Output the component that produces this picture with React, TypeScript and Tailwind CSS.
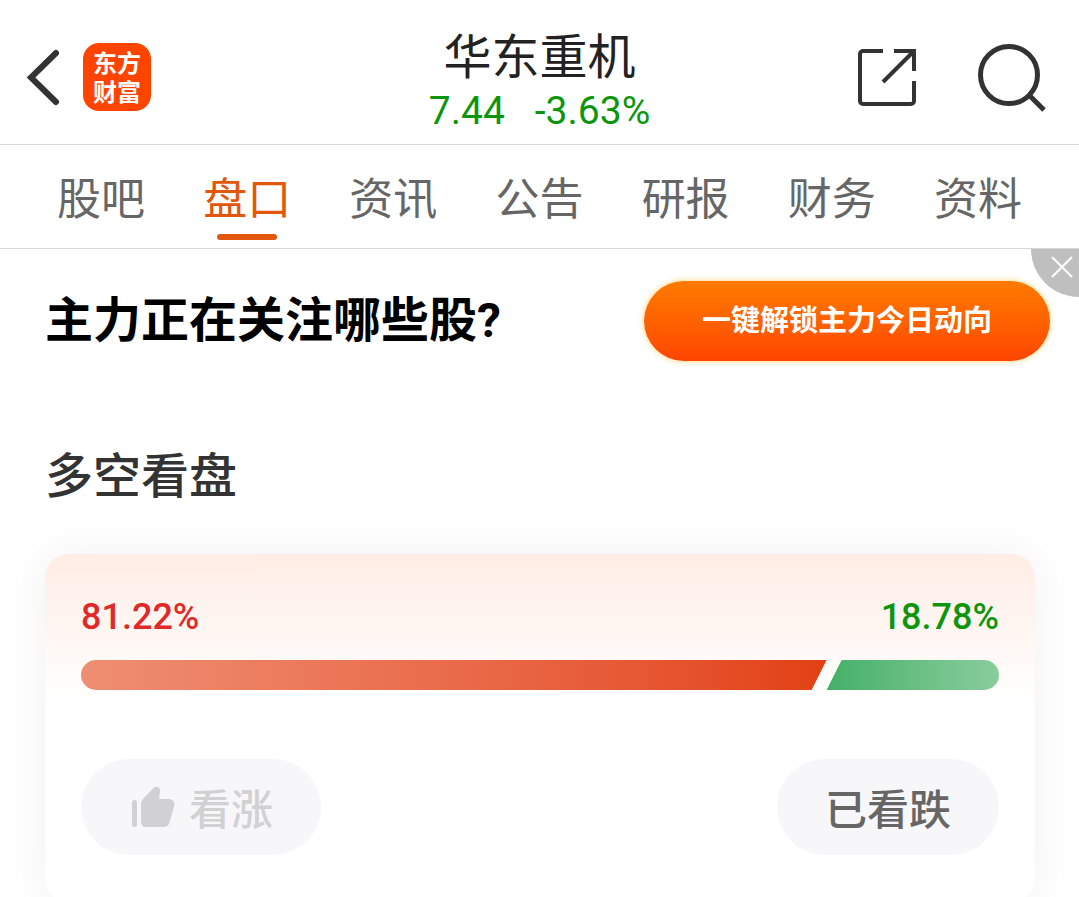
const tabs = ["股吧", "盘口", "资讯", "公告", "研报", "财务", "资料"];
const activeTab = "盘口";

const stock = {
  name: "华东重机",
  price: "7.44",
  change: "-3.63%",
};

const votes = { up: 81.22, down: 18.78 };

const Header = () => {
  return (
    <header className="grid h-[145px] grid-cols-[1fr_auto_1fr] items-center border-b border-[#d8d8d8] px-6 pt-2.5">
      <div className="flex items-center gap-5">
        <button type="button" aria-label="返回">
          <svg width="39" height="60" viewBox="0 0 39 60" fill="none" className="block">
            <path d="M32 6L7 30.500L32 55" stroke="#333" strokeWidth="6" strokeLinecap="round" />
          </svg>
        </button>
        <a
          href="#home"
          className="flex size-17 items-center justify-center rounded-2xl bg-[#ff4400] pb-0.5 text-2xl leading-[29px] font-bold text-white"
        >
          <span className="w-12 break-all">东方财富</span>
        </a>
      </div>

      <div className="flex flex-col items-center pt-2">
        <h1 className="text-5xl leading-[60px] text-[#222]">{stock.name}</h1>
        <p className="flex gap-[30px] font-[Roboto] text-[39px] leading-14 text-[#0d960d]">
          <span>{stock.price}</span>
          <span>{stock.change}</span>
        </p>
      </div>

      <div className="flex items-center justify-end gap-14">
        <button type="button" aria-label="分享">
          <svg width="64" height="64" viewBox="0 0 64 64" fill="none" stroke="#333" strokeWidth="4">
            <path d="M28 6H8a3 3 0 0 0-3 3V56a3 3 0 0 0 3 3H56a3 3 0 0 0 3-3V36" />
            <path d="M39 6H59V26" />
            <path d="M58 7L28 37" />
          </svg>
        </button>
        <button type="button" aria-label="搜索">
          <svg width="80" height="72" viewBox="0 0 80 72" fill="none" stroke="#333">
            <circle cx="34" cy="34" r="28.500" strokeWidth="5" />
            <path d="M54 54L69 69" strokeWidth="5" />
          </svg>
        </button>
      </div>
    </header>
  );
};

const TabBar = () => {
  return (
    <nav className="flex border-b border-[#d8d8d8] px-7">
      {tabs.map((tab) => (
        <a
          key={tab}
          href={`#${tab}`}
          aria-current={tab === activeTab ? "page" : undefined}
          className={`flex flex-1 flex-col items-center pt-[23px] pb-2 text-[44px] leading-14 ${tab === activeTab ? "text-[#e2570b]" : "text-[#666]"}`}
        >
          {tab}
          <span className={`mt-2.5 h-1.5 w-15 rounded-full ${tab === activeTab ? "bg-[#e2570b]" : ""}`} />
        </a>
      ))}
    </nav>
  );
};

const Banner = () => {
  return (
    <section className="relative flex items-center justify-between py-8 pr-[29px] pl-[45px]">
      <h2 className="font-['Roboto','Noto_Sans_CJK_SC',sans-serif] text-5xl leading-14 font-bold text-black">
        主力正在关注哪些股?
      </h2>
      <button
        type="button"
        className="h-20 rounded-full bg-linear-to-b from-[#ff7a00] to-[#ff4400] px-[58px] pb-1 text-[29px] font-bold text-white shadow-[0_0_6px_#ffcf70]"
      >
        一键解锁主力今日动向
      </button>
      <button
        type="button"
        aria-label="关闭"
        className="absolute top-0 right-0 flex size-12 items-center justify-end rounded-bl-full bg-[#bfbfbf] pr-1.5 pb-3"
      >
        <svg width="22" height="22" viewBox="0 0 22 22" stroke="#fff" strokeWidth="2">
          <path d="M1 1L21 21M21 1L1 21" />
        </svg>
      </button>
    </section>
  );
};

const VoteCard = () => {
  return (
    <div className="rounded-3xl bg-white bg-linear-to-b from-[#ffede5] to-white to-42% px-9 pt-10 pb-12 shadow-[0_0_48px_rgba(0,0,0,0.06)]">
      <div className="flex justify-between font-[Roboto] text-4xl leading-[46px] font-medium">
        <span className="text-[#e02a2a]">{votes.up}%</span>
        <span className="text-[#0d960d]">{votes.down}%</span>
      </div>

      <div className="mt-5 flex h-[30px] overflow-hidden rounded-full">
        <div
          className="bg-linear-to-r from-[#ee8e72] to-[#e24012] [clip-path:polygon(0_0,100%_0,calc(100%-15px)_100%,0_100%)]"
          style={{ width: `${votes.up}%` }}
        />
        <div className="flex-1 bg-linear-to-r from-[#42b067] to-[#88cd9d] [clip-path:polygon(15px_0,100%_0,100%_100%,0_100%)]" />
      </div>

      <div className="mt-[69px] flex justify-between text-[42px] font-medium">
        <button
          type="button"
          className="flex h-24 items-center gap-3 rounded-full bg-[#f7f7fa] px-12 pb-0.5 text-[#d1d1d3]"
        >
          <svg width="48" height="48" viewBox="0 0 48 48" fill="currentColor">
            <rect x="3" y="18" width="5" height="27" rx="2.500" />
            <path d="M12 22c0-2 1-4 2-5L24 6.500c1-1.500 3-2 4.500-1.500 2 .7 3 2.500 2.500 4.500L30 17H40c4 0 6.500 4 5 8L40 42c-1 2-3 3-5 3H17c-3 0-5-2-5-5Z" />
          </svg>
          看涨
        </button>
        <button type="button" className="h-24 rounded-full bg-[#f7f7fa] px-12 pb-0.5 text-[#666]">
          已看跌
        </button>
      </div>
    </div>
  );
};

export default function App() {
  return (
    <div className="h-screen overflow-x-hidden overflow-y-auto bg-white font-['Noto_Sans_CJK_SC',sans-serif] [scrollbar-width:none]">
      <Header />
      <TabBar />
      <Banner />
      <main className="pt-[51px] pr-11 pb-10 pl-[45px]">
        <h2 className="mb-[54px] text-5xl leading-14 font-medium text-[#333]">多空看盘</h2>
        <VoteCard />
      </main>
    </div>
  );
}
